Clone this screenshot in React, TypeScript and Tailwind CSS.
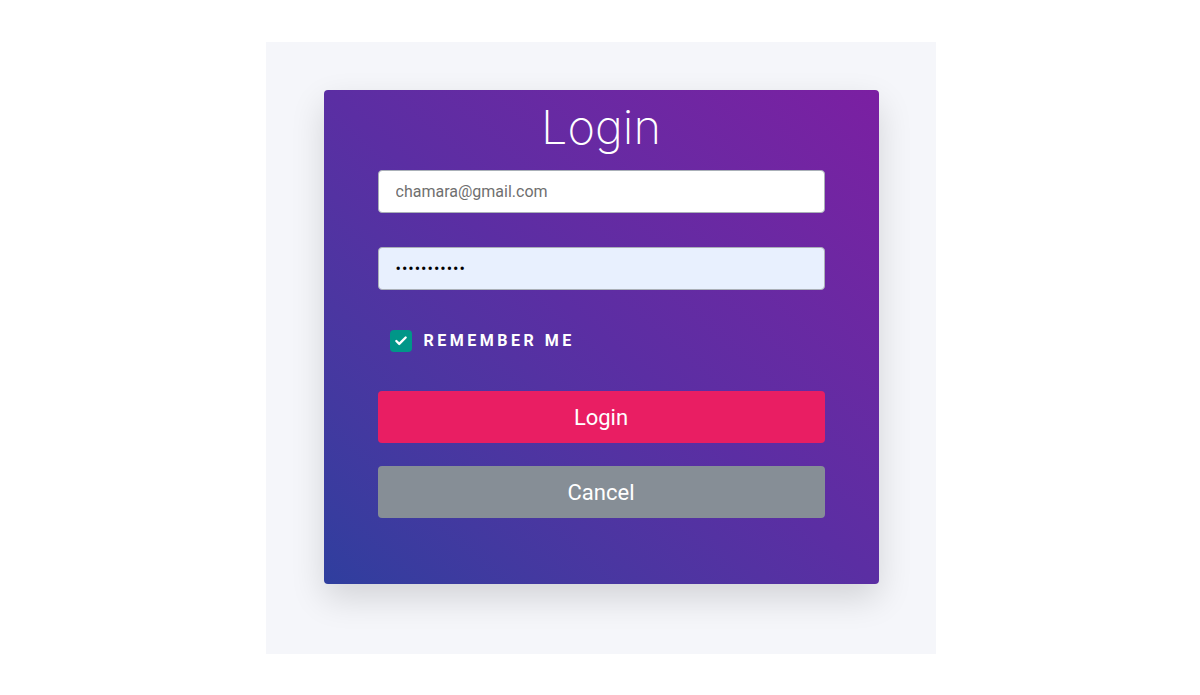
import { Check } from 'lucide-react';

export default function App() {
  return (
    <div className="flex h-[695px] w-[1200px] justify-center bg-white pt-[42px]" style={{ fontFamily: 'Roboto, "Liberation Sans", sans-serif' }}>
      <div className="ml-[2px] flex h-[612px] w-[670px] justify-center bg-[#f5f6fa] pt-[48px]">
        <div className="flex h-[494px] w-[555px] flex-col items-center rounded bg-gradient-to-tr from-[#2f3e9e] via-[#5b2ea3] to-[#7b1fa2] shadow-[0_14px_34px_rgba(0,0,0,0.14)]">
          <h1 className="mt-[8px] text-[47px] font-extralight leading-[58px] text-white" style={{ fontFamily: 'Inter, sans-serif' }}>
            Login
          </h1>
          <div className="mt-[14px] flex w-[447px] flex-col">
            <input
              type="email"
              defaultValue="chamara@gmail.com"
              className="h-[43px] w-full rounded border border-[#aab0b8] bg-white px-[17px] text-[16px] text-[#6f6f6f] outline-none"
            />
            <input
              type="password"
              defaultValue="chamara1234"
              className="mt-[34px] h-[43px] w-full rounded border border-[#aab0b8] bg-[#e8f0fe] px-[17px] text-[16px] tracking-[1px] text-black outline-none"
            />
            <label className="ml-[12px] mt-[39px] flex items-center gap-[12px]">
              <span className="flex h-[22px] w-[22px] items-center justify-center rounded-[4px] bg-[#009688]">
                <Check className="h-[14px] w-[14px] text-white" strokeWidth={4} />
              </span>
              <span className="text-[16px] font-bold tracking-[3.5px] text-white">REMEMBER ME</span>
            </label>
            <button className="mt-[38px] h-[52px] w-full rounded bg-[#e91e63] text-[22px] text-white">Login</button>
            <button className="mt-[23px] h-[52px] w-full rounded bg-[#868e96] text-[22px] text-white">Cancel</button>
          </div>
        </div>
      </div>
    </div>
  );
}
